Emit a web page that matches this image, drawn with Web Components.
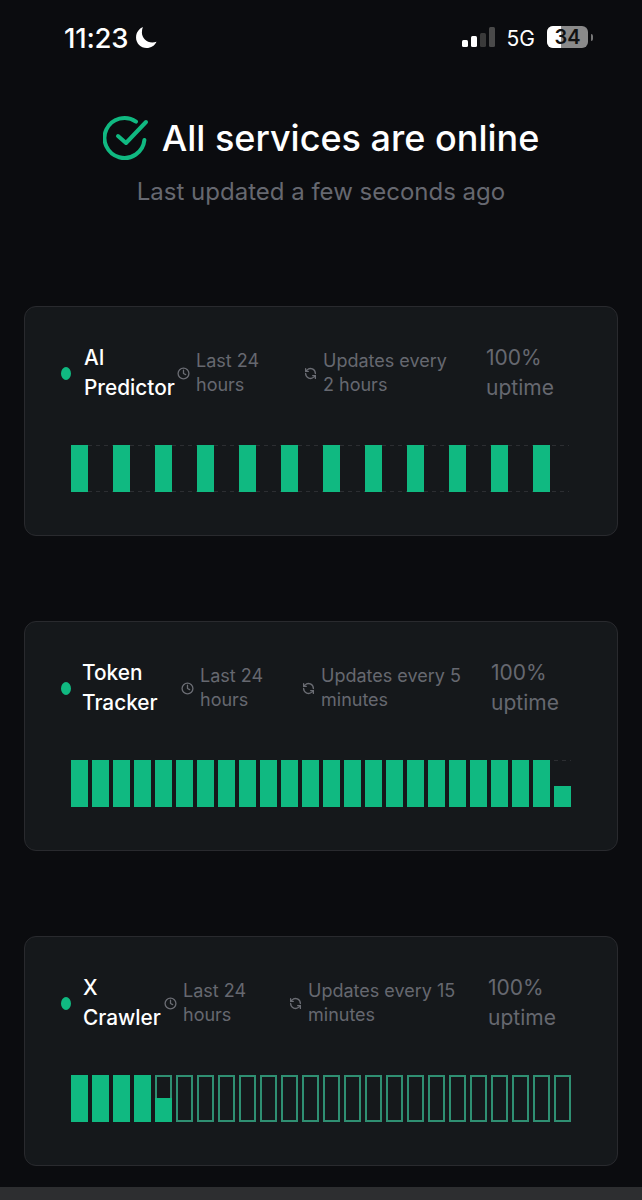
<!DOCTYPE html>
<html>
<head>
<meta charset="utf-8">
<title>Service status</title>
<style>
	html, body { margin: 0; background: #0b0c0f; }
	body { font-family: Inter, "Liberation Sans", sans-serif; width: 642px; height: 1200px; overflow: hidden; }
</style>
</head>
<body>
	<status-page>
		<status-bar></status-bar>
		<status-header title="All services are online" sub="Last updated a few seconds ago"></status-header>
		<service-card first-line="AI" second-line="Predictor" updates="Updates every" updates2="2 hours" cols="115 127 182" name-gap="13" mode="alternate"></service-card>
		<service-card first-line="Token" second-line="Tracker" updates="Updates every 5" updates2="minutes" cols="119 121 189" name-gap="11" mode="almost"></service-card>
		<service-card first-line="X" second-line="Crawler" updates="Updates every 15" updates2="minutes" cols="102 125 199" name-gap="12" mode="started"></service-card>
	</status-page>
	<script>
	customElements.define('status-page', class extends HTMLElement {
	  connectedCallback() {
	    this.attachShadow({mode: 'open'});
	    this.shadowRoot.innerHTML = `
	    	<style>
	    		:host { display: flex; flex-direction: column; height: 1200px; box-sizing: border-box; padding: 0 24px; position: relative; }
	    		slot { display: block; }
	    		.strip { position: absolute; left: 0; right: 0; top: 1187px; height: 13px; background: #2d2e30; }
	    	</style>
	    	<slot></slot>
	    	<div class="strip"></div>
	    `;
	  }
	});

	customElements.define('status-bar', class extends HTMLElement {
	  connectedCallback() {
	    this.attachShadow({mode: 'open'});
	    this.shadowRoot.innerHTML = `
	    	<style>
	    		:host { display: flex; align-items: center; justify-content: space-between; height: 76px; padding: 0 25px 0 40px; color: #fff; }
	    		.left, .right { display: flex; align-items: center; }
	    		.time { font-size: 27.500px; font-weight: 500; letter-spacing: -0.2px; }
	    		.moon { margin: -2px 0 0 7px; }
	    		.signal { margin-top: -2px; }
	    		.net { font-size: 21px; margin: 1px 12px 0 12px; }
	    		.batt { position: relative; width: 41px; height: 22px; margin-top: -2px; border-radius: 6px; overflow: hidden; background: #8a8a8a; color: #111; font-size: 20px; font-weight: 600; text-align: center; line-height: 22px; }
	    		.batt i { position: absolute; left: 0; top: 0; bottom: 0; width: 14px; background: #fff; }
	    		.batt span { position: relative; }
	    		.cap { width: 2px; height: 7px; margin: -2px 0 0 3px; background: #777; border-radius: 0 2px 2px 0; }
	    	</style>
	    	<div class="left">
	    		<span class="time">11:23</span>
	    		<svg class="moon" width="23" height="23" viewBox="0 0 22 22"><path fill="#fff" d="M7.500 1C4 2.600 1 6 1 11c0 5.600 4.600 10 10 10 4.400 0 8-2.400 9.600-6-1.200.5-2.700.8-4.100.8-5.500 0-9.900-4.300-9.900-9.500 0-1.800.3-3.500.9-5.300z"/></svg>
	    	</div>
	    	<div class="right">
	    		<svg class="signal" width="33" height="20" viewBox="0 0 33 20">
	    			<rect x="0" y="13" width="6" height="7" rx="1.500" fill="#fff"/>
	    			<rect x="9" y="9" width="6" height="11" rx="1.500" fill="#fff"/>
	    			<rect x="18" y="6" width="6" height="14" rx="1.500" fill="#3a3a3a"/>
	    			<rect x="27" y="0" width="6" height="20" rx="1.500" fill="#4a4a4a"/>
	    		</svg>
	    		<span class="net">5G</span>
	    		<div class="batt"><i></i><span>34</span></div>
	    		<div class="cap"></div>
	    	</div>
	    `;
	  }
	});

	customElements.define('status-header', class extends HTMLElement {
	  connectedCallback() {
	    this.attachShadow({mode: 'open'});
	    this.shadowRoot.innerHTML = `
	    	<style>
	    		:host { display: flex; flex-direction: column; align-items: center; height: 230px; padding-top: 36px; box-sizing: border-box; }
	    		.title { display: flex; align-items: center; gap: 13px; color: #fff; font-size: 36px; line-height: 52px; font-weight: 500; white-space: nowrap; }
	    		.sub { color: #666870; font-size: 24px; line-height: 30px; margin-top: 13px; }
	    	</style>
	    	<div class="title">
	    		<svg width="46" height="46" viewBox="0 0 46 46" fill="none" stroke="#10b981" stroke-width="4" stroke-linecap="round" stroke-linejoin="round">
	    			<path d="M41.400 25A20 20 0 1 1 33 6.600"/>
	    			<path d="M15 21l8 7L43 7"/>
	    		</svg>
	    		<span>${this.getAttribute('title')}</span>
	    	</div>
	    	<div class="sub">${this.getAttribute('sub')}</div>
	    `;
	  }
	});

	customElements.define('uptime-bars', class extends HTMLElement {
	  connectedCallback() {
	    this.attachShadow({mode: 'open'});
	    var mode = this.getAttribute('mode');
	    var cells = '';
	    for (var i = 0; i < 24; i++) {
	      var cls = 'empty';
	      if (mode == 'alternate') cls = i % 2 == 0 ? 'full' : 'gap';
	      if (mode == 'almost') cls = i < 23 ? 'full' : 'low';
	      if (mode == 'started') cls = i < 4 ? 'full' : (i == 4 ? 'half' : 'empty');
	      cells += '<div class="cell ' + cls + '"><i></i></div>';
	    }
	    this.shadowRoot.innerHTML = `
	    	<style>
	    		:host { display: grid; grid-template-columns: repeat(24, 17px); column-gap: 4px; height: 47px; --dash: repeating-linear-gradient(90deg, #2c2e32 0 4px, transparent 4px 8px); }
	    		.cell { position: relative; box-sizing: border-box; height: 47px; }
	    		.cell i { display: block; width: 100%; height: 100%; box-sizing: border-box; }
	    		.full i { background: #10b981; }
	    		/* faint grid lines between bars */
	    		.gap i { width: 25px; margin-left: -4px; background: var(--dash) top / 100% 1px no-repeat, var(--dash) bottom / 100% 1px no-repeat; }
	    		.gap:last-child i { width: 17px; margin-left: -2px; }
	    		.low { background: var(--dash) top / 100% 1px no-repeat; }
	    		.low i { height: 21px; margin-top: 26px; background: #10b981; }
	    		.half, .empty { border: 2px solid #2f8f72; }
	    		.half i { position: absolute; left: -2px; right: -2px; bottom: -2px; width: auto; height: 24px; background: #10b981; }
	    		.empty i { display: none; }
	    	</style>
	    	${cells}
	    `;
	  }
	});

	customElements.define('service-card', class extends HTMLElement {
	  connectedCallback() {
	    this.attachShadow({mode: 'open'});
	    var cols = this.getAttribute('cols').split(' ');
	    var clock = '<svg width="13" height="13" viewBox="0 0 24 24" fill="none" stroke="#6b6d74" stroke-width="2.400" stroke-linecap="round" stroke-linejoin="round"><circle cx="12" cy="12" r="10"/><path d="M12 6v6l4 2"/></svg>';
	    var sync = '<svg width="13" height="13" viewBox="0 0 24 24" fill="none" stroke="#6b6d74" stroke-width="2.400" stroke-linecap="round" stroke-linejoin="round"><path d="M21 12a9 9 0 0 0-15.500-6.300L3 8"/><path d="M3 3v5h5"/><path d="M3 12a9 9 0 0 0 15.500 6.300L21 16"/><path d="M16 16h5v5"/></svg>';
	    this.shadowRoot.innerHTML = `
	    	<style>
	    		:host { display: block; box-sizing: border-box; height: 230px; margin-bottom: 85px; padding: 36px 37px 0; background: #15181b; border: 1px solid #292a2e; border-radius: 12px; }
	    		.row { display: grid; grid-template-columns: ${cols[0]}px ${cols[1]}px ${cols[2]}px 1fr; align-items: center; height: 60px; margin-bottom: 42px; }
	    		.name { display: flex; align-items: center; gap: ${this.getAttribute('name-gap')}px; margin-left: -1px; color: #fff; font-size: 20.800px; line-height: 30px; font-weight: 500; white-space: nowrap; }
	    		.dot { width: 10px; height: 13px; border-radius: 50%; background: #10b981; }
	    		.meta { display: flex; align-items: center; gap: 6px; color: #666870; font-size: 18px; line-height: 24px; white-space: nowrap; }
	    		.uptime { color: #666870; font-size: 21px; line-height: 30px; white-space: nowrap; }
	    		uptime-bars { margin-left: 9px; }
	    	</style>
	    	<div class="row">
	    		<div class="name"><div class="dot"></div><div>${this.getAttribute('first-line')}<br>${this.getAttribute('second-line')}</div></div>
	    		<div class="meta">${clock}<div>Last 24<br>hours</div></div>
	    		<div class="meta">${sync}<div>${this.getAttribute('updates')}<br>${this.getAttribute('updates2')}</div></div>
	    		<div class="uptime">100%<br>uptime</div>
	    	</div>
	    	<uptime-bars mode="${this.getAttribute('mode')}"></uptime-bars>
	    `;
	  }
	});
	</script>
</body>
</html>
